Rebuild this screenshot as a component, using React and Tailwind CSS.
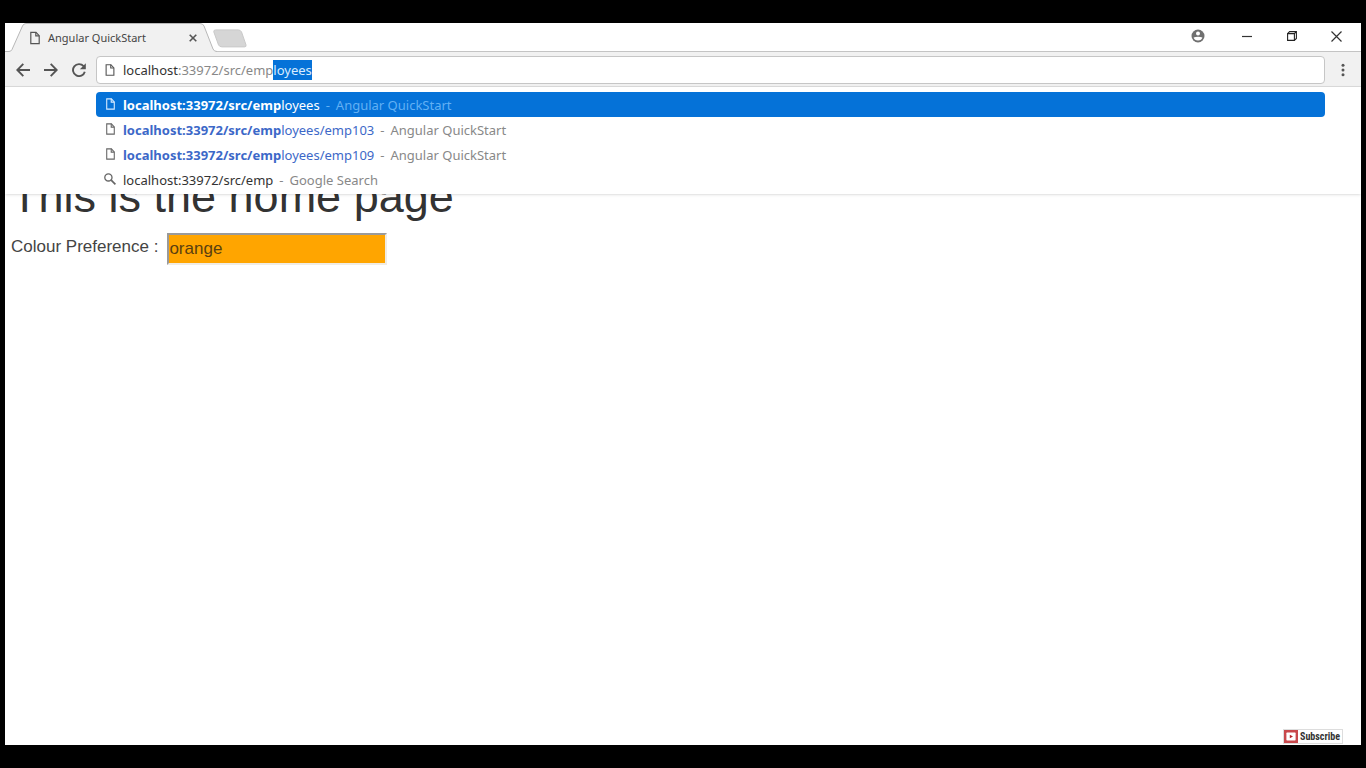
import React from "react";

function PageIcon({ className }) {
  return (
    <svg viewBox="0 0 10 13" className={className} fill="none" stroke="currentColor" strokeWidth="1.2" aria-hidden="true">
      <path d="M0.8 0.8H6L9.2 4.2V12.2H0.8Z" />
      <path d="M5.8 0.8V4.4H9.2" />
    </svg>
  );
}

function SearchIcon({ className }) {
  return (
    <svg viewBox="0 0 12 12" className={className} fill="none" stroke="currentColor" aria-hidden="true">
      <circle cx="4.4" cy="4.4" r="3.6" strokeWidth="1.3" />
      <path d="M7.2 7.2L11.4 11.4" strokeWidth="1.7" />
    </svg>
  );
}

function TabStrip() {
  return (
    <header className="flex h-7 items-stretch bg-white">
      <div className="relative flex w-[208px] items-center">
        <svg viewBox="0 0 212 29" className="absolute top-0 left-0 h-[29px] w-[212px]" aria-hidden="true">
          <path d="M0 29V28.5H4Q6 28.5 7 26.5L17.5 3Q18.5 0.5 21 0.5H195Q198 0.5 199 3L208 26Q209 28.5 212 28.5V29Z" fill="#f1f1f1" />
          <path d="M0 28.5H4Q6 28.5 7 26.5L17.5 3Q18.5 0.5 21 0.5H195Q198 0.5 199 3L208 26Q209 28.5 212 28.5" fill="none" stroke="#b8b8b8" />
        </svg>
        <div className="relative flex w-full items-center pt-0.5 pr-2 pl-[25px]">
          <PageIcon className="h-[14px] w-[10px] text-[#555]" />
          <span className="ml-2 flex-1 text-[11px] text-[#444]">Angular QuickStart</span>
          <button type="button" aria-label="Close tab" className="flex size-6 items-center justify-center text-[#555]">
            <svg viewBox="0 0 8 8" className="size-2" stroke="currentColor" strokeWidth="1.6" aria-hidden="true">
              <path d="M0.7 0.7L7.3 7.3M7.3 0.7L0.7 7.3" />
            </svg>
          </button>
        </div>
      </div>
      <button type="button" aria-label="New tab" className="mt-[6px] h-[19px] w-9">
        <svg viewBox="0 0 36 19" className="h-[19px] w-9" aria-hidden="true">
          <path d="M2.5 0.9H25Q27.5 0.9 28.5 2.9L33 15.9Q33.5 17.9 31.5 17.9H9Q6.5 17.9 5.5 15.9L0.8 2.9Q0.5 0.9 2.5 0.9Z" fill="#d6d6d6" stroke="#c9c9c9" />
        </svg>
      </button>
      <div className="ml-auto flex items-center pr-[2px] pb-0.5">
        <button type="button" aria-label="Profile" className="flex h-7 w-13 items-center justify-center">
          <svg viewBox="0 0 14 14" className="size-[14px]" aria-hidden="true">
            <circle cx="7" cy="7" r="6.5" fill="#707070" />
            <circle cx="7" cy="4.6" r="2" fill="#fff" />
            <path d="M2.6 8.6Q4.5 7.7 7 7.7T11.4 8.6Q10.6 11.6 7 11.6T2.6 8.6Z" fill="#fff" />
          </svg>
        </button>
        <button type="button" aria-label="Minimize" className="flex h-7 w-[45px] items-center justify-center">
          <svg viewBox="0 0 10 10" className="size-[10px]" stroke="#333" strokeWidth="1.2" aria-hidden="true"><path d="M0 5.5H10" /></svg>
        </button>
        <button type="button" aria-label="Restore" className="flex h-7 w-[45px] items-center justify-center">
          <svg viewBox="0 0 10 10" className="size-[10px]" fill="none" stroke="#222" strokeWidth="1.1" aria-hidden="true">
            <path d="M0.6 2.6H7.4V9.4H0.6ZM0.6 2.6L2.6 0.6H9.4V7.4L7.4 9.4M7.4 2.6L9.4 0.6" />
          </svg>
        </button>
        <button type="button" aria-label="Close window" className="flex h-7 w-[45px] items-center justify-center">
          <svg viewBox="0 0 11 11" className="size-[11px]" stroke="#333" strokeWidth="1.2" aria-hidden="true"><path d="M0.5 0.5L10.5 10.5M10.5 0.5L0.5 10.5" /></svg>
        </button>
      </div>
    </header>
  );
}

function Toolbar() {
  return (
    <nav className="flex h-9 items-center border-y border-t-[#c4c4c4] border-b-[#dcdcdc] bg-[#f1f1f1] pt-px pl-1 text-[#555]">
      <button type="button" aria-label="Back" className="flex size-7 items-center justify-center">
        <svg viewBox="0 0 14 14" className="size-[14px]" fill="none" stroke="currentColor" strokeWidth="1.9" aria-hidden="true"><path d="M14 7H1.5M7.3 0.9L1.3 7L7.3 13.1" /></svg>
      </button>
      <button type="button" aria-label="Forward" className="flex size-7 items-center justify-center">
        <svg viewBox="0 0 14 14" className="size-[14px]" fill="none" stroke="currentColor" strokeWidth="1.9" aria-hidden="true"><path d="M0 7H12.5M6.7 0.9L12.7 7L6.7 13.1" /></svg>
      </button>
      <button type="button" aria-label="Reload" className="flex size-7 items-center justify-center">
        <svg viewBox="0 0 14 14" className="size-[14px]" fill="none" stroke="currentColor" strokeWidth="1.9" aria-hidden="true">
          <path d="M11.6 3.2A6 6 0 1 0 12.8 8.7" />
          <path d="M13.8 0.3V6.2H7.9Z" fill="currentColor" stroke="none" />
        </svg>
      </button>
      <div className="relative ml-[3px] flex h-7 flex-1 items-center rounded-sm border border-[#c6c6c6] bg-white pl-2">
        <PageIcon className="h-3 w-[10px] text-[#555]" />
        <input
          type="text"
          aria-label="Address and search bar"
          defaultValue="localhost:33972/src/employees"
          className="ml-2 h-5 flex-1 bg-transparent text-[13px] leading-5 text-transparent outline-none"
        />
        <div aria-hidden="true" className="pointer-events-none absolute left-[26px] flex text-[13px] leading-5 text-[#888]">
          <span className="text-[#333]">localhost</span>
          <span>:33972/src/emp</span>
          <span className="bg-[#0572d8] text-[#d8ecff]">loyees</span>
        </div>
      </div>
      <button type="button" aria-label="Menu" className="flex h-7 w-9 items-center justify-center">
        <svg viewBox="0 0 4 14" className="h-[14px] w-1" fill="currentColor" aria-hidden="true">
          <circle cx="2" cy="2.2" r="1.5" /><circle cx="2" cy="7" r="1.5" /><circle cx="2" cy="11.8" r="1.5" />
        </svg>
      </button>
    </nav>
  );
}

const suggestions = [
  { match: "localhost:33972/src/emp", rest: "loyees", title: "Angular QuickStart", selected: true },
  { match: "localhost:33972/src/emp", rest: "loyees/emp103", title: "Angular QuickStart" },
  { match: "localhost:33972/src/emp", rest: "loyees/emp109", title: "Angular QuickStart" },
  { query: "localhost:33972/src/emp", title: "Google Search" },
];

function Suggestion({ item }) {
  const row = item.selected ? "bg-[#0572d8] text-white" : "text-[#3c68c8]";
  const icon = item.selected ? "text-[#d8ecff]" : "text-[#666]";
  const title = item.selected ? "text-[#62b0f4]" : "text-[#888]";
  return (
    <li role="option" aria-selected={!!item.selected} className={`flex h-[25px] items-center rounded-sm pl-2 text-[13px] leading-5 ${row}`}>
      <span className={`mr-[7px] flex w-3 justify-center pb-0.5 ${icon}`}>
        {item.query ? <SearchIcon className="size-3" /> : <PageIcon className="h-3 w-[9px]" />}
      </span>
      <span className="flex">
        {item.query ? (
          <span className="text-[#333]">{item.query}</span>
        ) : (
          <span><b className="font-bold">{item.match}</b>{item.rest}</span>
        )}
        <span className={`mx-1.5 ${title}`}>-</span>
        <span className={title}>{item.title}</span>
      </span>
    </li>
  );
}

export default function App() {
  return (
    <div className="flex min-h-screen flex-col bg-black px-[5px] py-[23px] font-['Noto_Sans','Open_Sans',sans-serif]">
      <div className="flex flex-1 flex-col bg-white">
        <TabStrip />
        <Toolbar />
        <div className="relative flex flex-1 flex-col">
          <ul role="listbox" aria-label="Suggestions" className="absolute inset-x-0 top-0 z-10 bg-white pt-[5px] pr-9 pb-0.5 pl-[91px] shadow-sm">
            {suggestions.map((s, i) => <Suggestion key={i} item={s} />)}
          </ul>
          <main className="flex-1 px-1.5 pt-[84px] font-['Liberation_Sans',Arial,sans-serif] text-[#333]">
            <h1 className="text-[45px] leading-[52px]">This is the home page</h1>
            <div className="mt-2.5 flex items-start text-[17px] text-[#444]">
              <label htmlFor="colour" className="leading-7">Colour Preference :</label>
              <input
                id="colour"
                type="text"
                defaultValue="orange"
                className="ml-[9px] h-8 w-[220px] border-2 border-t-[#9a9a9a] border-r-[#f0ece4] border-b-[#f0ece4] border-l-[#9a9a9a] bg-[#ffa500] text-[#5a4010] outline-none"
              />
            </div>
          </main>
          <a href="#subscribe" className="mr-[18px] mb-px flex h-[15px] items-stretch self-end border border-[#ddd] bg-white">
            <svg viewBox="0 0 14 13" className="h-[13px] w-[14px]" aria-hidden="true">
              <rect width="14" height="13" fill="#c8484c" />
              <rect x="2.4" y="2.6" width="9.2" height="7.8" rx="0.6" fill="#fff" />
              <path d="M5.8 4.8L9 6.5L5.8 8.2Z" fill="#b82428" />
            </svg>
            <span className="px-0.5 font-['Liberation_Sans_Narrow','Roboto_Condensed','Roboto',sans-serif] text-[10px] leading-[13px] font-bold text-[#333]">Subscribe</span>
          </a>
        </div>
      </div>
    </div>
  );
}
